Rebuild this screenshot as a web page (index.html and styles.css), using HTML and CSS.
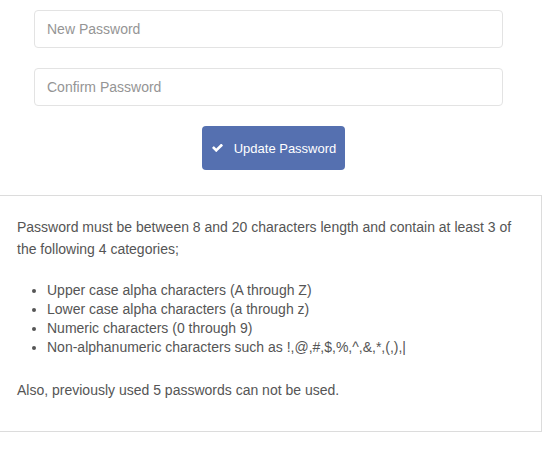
FILE: index.html
```html
<!DOCTYPE html>
<html lang="en">
<head>
<meta charset="utf-8">
<title>Change Password</title>
<link rel="stylesheet" href="styles.css">
</head>
<body>
<form class="pw-form">
  <input class="field" type="password" placeholder="New Password">
  <input class="field" type="password" placeholder="Confirm Password">
  <div class="actions">
    <button type="button" class="btn-update">
      <svg class="check" viewBox="121 362 1550 1160" width="11" height="8" aria-hidden="true"><path fill="#fff" d="M1671 566q0 40-28 68l-724 724-136 136q-28 28-68 28t-68-28l-136-136-362-362q-28-28-28-68t28-68l136-136q28-28 68-28t68 28l294 295 656-657q28-28 68-28t68 28l136 136q28 28 28 68z"/></svg>
      <span>Update Password</span>
    </button>
  </div>
</form>
<div class="rules">
  <p class="rules-intro">Password must be between 8 and 20 characters length and contain at least 3 of the following 4 categories;</p>
  <ul class="rules-list">
    <li>Upper case alpha characters (A through Z)</li>
    <li>Lower case alpha characters (a through z)</li>
    <li>Numeric characters (0 through 9)</li>
    <li>Non-alphanumeric characters such as !,@,#,$,%,^,&amp;,*,(,),|</li>
  </ul>
  <p class="rules-note">Also, previously used 5 passwords can not be used.</p>
</div>
</body>
</html>
```

FILE: styles.css
```css
* { box-sizing: border-box; }

html, body {
  margin: 0;
  padding: 0;
  background: #fff;
  font-family: "Liberation Sans", Arial, Helvetica, sans-serif;
  color: #555;
  overflow: hidden;
}

.pw-form {
  display: flex;
  flex-direction: column;
  gap: 20px;
  padding: 10px 0 0 0;
}

.field {
  display: block;
  margin: 0 47px 0 34px;
  height: 38px;
  padding: 0 12px;
  border: 1px solid #e3e3e3;
  border-radius: 4px;
  font-family: inherit;
  font-size: 14px;
  color: #555;
  background: #fff;
  outline: none;
}

.field::placeholder {
  color: #959595;
  opacity: 1;
}

.actions {
  display: flex;
  justify-content: center;
  padding-right: 3px;
}

.btn-update {
  display: flex;
  align-items: center;
  gap: 11px;
  height: 44px;
  padding: 0 9px 0 10px;
  border: none;
  border-radius: 4px;
  background: #5570b0;
  color: #fff;
  font-family: inherit;
  font-size: 13px;
  cursor: pointer;
}

.check { display: block; }

.rules {
  margin: 25px 0 0 -1px;
  width: 543px;
  border: 1px solid #dcdcdc;
  padding: 20px 17px 20px 17px;
  font-size: 14px;
  color: #555;
}

.rules-intro {
  margin: 0 0 21px;
  line-height: 22px;
}

.rules-list {
  margin: 0 0 22px;
  padding-left: 30px;
  line-height: 19px;
}

.rules-note {
  margin: 0 0 10px;
  line-height: 22px;
}
```
